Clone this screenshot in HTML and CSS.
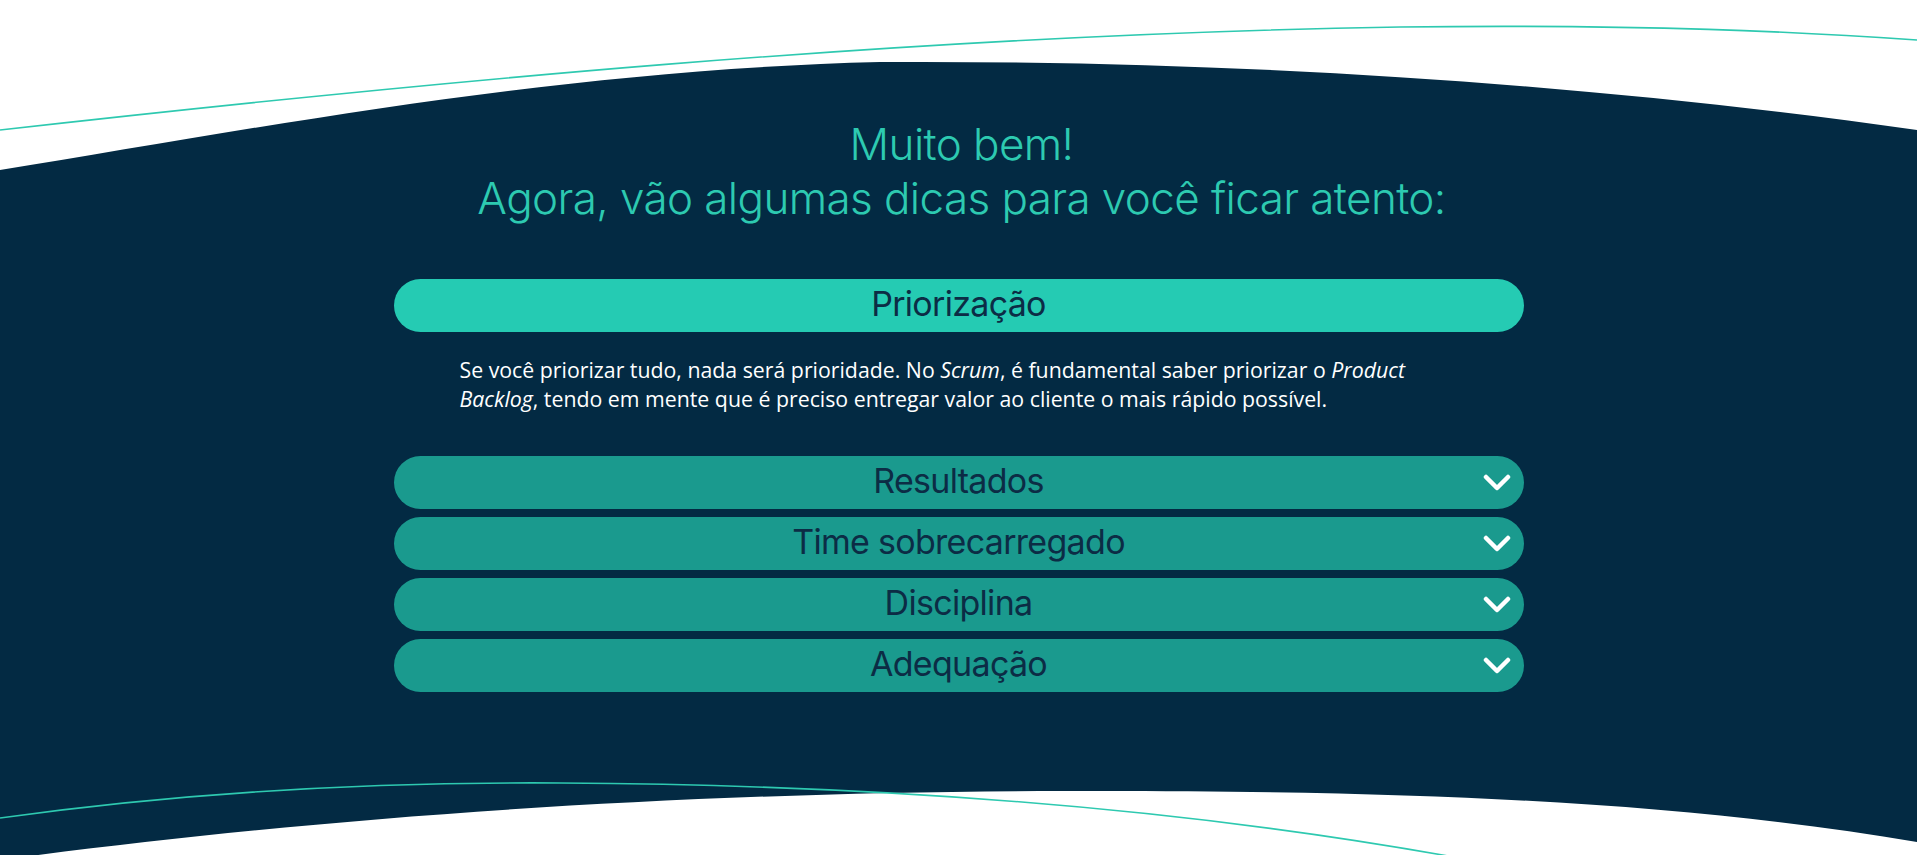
FILE: index.html
```html
<!DOCTYPE html>
<html lang="pt-BR">
<head>
    <meta charset="UTF-8">
    <title>Dicas - Scrum</title>
    <link rel="stylesheet" href="styles.css">
</head>
<body>
    <section class="tips">
        <svg class="tips-bg" viewBox="0 0 1917 855" preserveAspectRatio="none">
            <!-- fundo escuro com as bordas curvas -->
            <path class="wave-dark" d="M0 170 C 250 130, 550 70, 880 62 C 1250 60, 1600 85, 1917 130 L1917 855 L0 855 Z"/>
            <path class="wave-light" d="M0 860 C 300 820, 650 792, 1063 791 C 1450 790, 1700 805, 1917 842 L1917 855 L0 855 Z"/>
            <!-- linhas finas -->
            <path class="wave-line" d="M0 130 C 400 85, 900 35, 1400 27 C 1650 24, 1800 32, 1917 40"/>
            <path class="wave-line" d="M0 818 C 200 790, 400 782, 560 783 C 900 785, 1200 810, 1470 860"/>
        </svg>

        <div class="tips-content">
            <h1 class="tips-title">Muito bem!<br>Agora, vão algumas dicas para você ficar atento:</h1>

            <div class="accordion">
                <div class="tip open">
                    <button class="tip-head">
                        <span></span>
                        <span class="tip-label">Priorização</span>
                        <span></span>
                    </button>
                    <p class="tip-body">Se você priorizar tudo, nada será prioridade. No <em>Scrum</em>, é fundamental saber priorizar o <em>Product Backlog</em>, tendo em mente que é preciso entregar valor ao cliente o mais rápido possível.</p>
                </div>

                <div class="tip">
                    <button class="tip-head">
                        <span></span>
                        <span class="tip-label">Resultados</span>
                        <svg class="chevron" viewBox="0 0 28 17"><polyline points="3,3 14,14 25,3"/></svg>
                    </button>
                </div>

                <div class="tip">
                    <button class="tip-head">
                        <span></span>
                        <span class="tip-label">Time sobrecarregado</span>
                        <svg class="chevron" viewBox="0 0 28 17"><polyline points="3,3 14,14 25,3"/></svg>
                    </button>
                </div>

                <div class="tip">
                    <button class="tip-head">
                        <span></span>
                        <span class="tip-label">Disciplina</span>
                        <svg class="chevron" viewBox="0 0 28 17"><polyline points="3,3 14,14 25,3"/></svg>
                    </button>
                </div>

                <div class="tip">
                    <button class="tip-head">
                        <span></span>
                        <span class="tip-label">Adequação</span>
                        <svg class="chevron" viewBox="0 0 28 17"><polyline points="3,3 14,14 25,3"/></svg>
                    </button>
                </div>
            </div>
        </div>
    </section>
</body>
</html>
```

FILE: styles.css
```css
:root {
    --navy: #032a43;
    --teal: #25cbb3;
    --teal-dark: #1a9a8e;
    --title: #2dcab1;
    --label: #0c2c45;
}

* {
    margin: 0;
    padding: 0;
    box-sizing: border-box;
}

body {
    background-color: #ffffff;
    font-family: Inter, 'Noto Sans', sans-serif;
}

.tips {
    position: relative;
    height: 855px;
    overflow: hidden;
}

.tips-bg {
    position: absolute;
    top: 0;
    left: 0;
    width: 100%;
    height: 100%;
}

.wave-dark {
    fill: var(--navy);
}

.wave-light {
    fill: #ffffff;
}

.wave-line {
    fill: none;
    stroke: #2ec9b0;
    stroke-width: 1.6;
}

.tips-content {
    position: relative;
    padding-top: 117px;
}

.tips-title {
    color: var(--title);
    font-weight: 300;
    font-size: 44px;
    line-height: 54px;
    letter-spacing: -0.6px;
    text-align: center;
    padding-left: 6px;
}

.accordion {
    width: 1130px;
    margin: 54px auto 0;
    display: flex;
    flex-direction: column;
    gap: 8px;
}

.tip-head {
    width: 100%;
    height: 53px;
    border: none;
    border-radius: 27px;
    background-color: var(--teal-dark);
    color: var(--label);
    font-family: Inter, 'Noto Sans', sans-serif;
    font-size: 34px;
    font-weight: 400;
    letter-spacing: -0.7px;
    display: grid;
    grid-template-columns: 1fr auto 1fr;
    align-items: center;
    padding: 0 13px 5px;
    cursor: pointer;
}

.tip.open .tip-head {
    background-color: var(--teal);
}

.chevron {
    width: 28px;
    height: 17px;
    margin-top: 5px;
    justify-self: end;
    fill: none;
    stroke: #ffffff;
    stroke-width: 4.5;
    stroke-linecap: round;
    stroke-linejoin: round;
}

.tip-body {
    color: #ffffff;
    font-family: 'Open Sans', sans-serif;
    font-size: 21.3px;
    font-weight: 500;
    line-height: 29px;
    padding: 23px 66px 0;
    margin-bottom: 35px;
}
```
